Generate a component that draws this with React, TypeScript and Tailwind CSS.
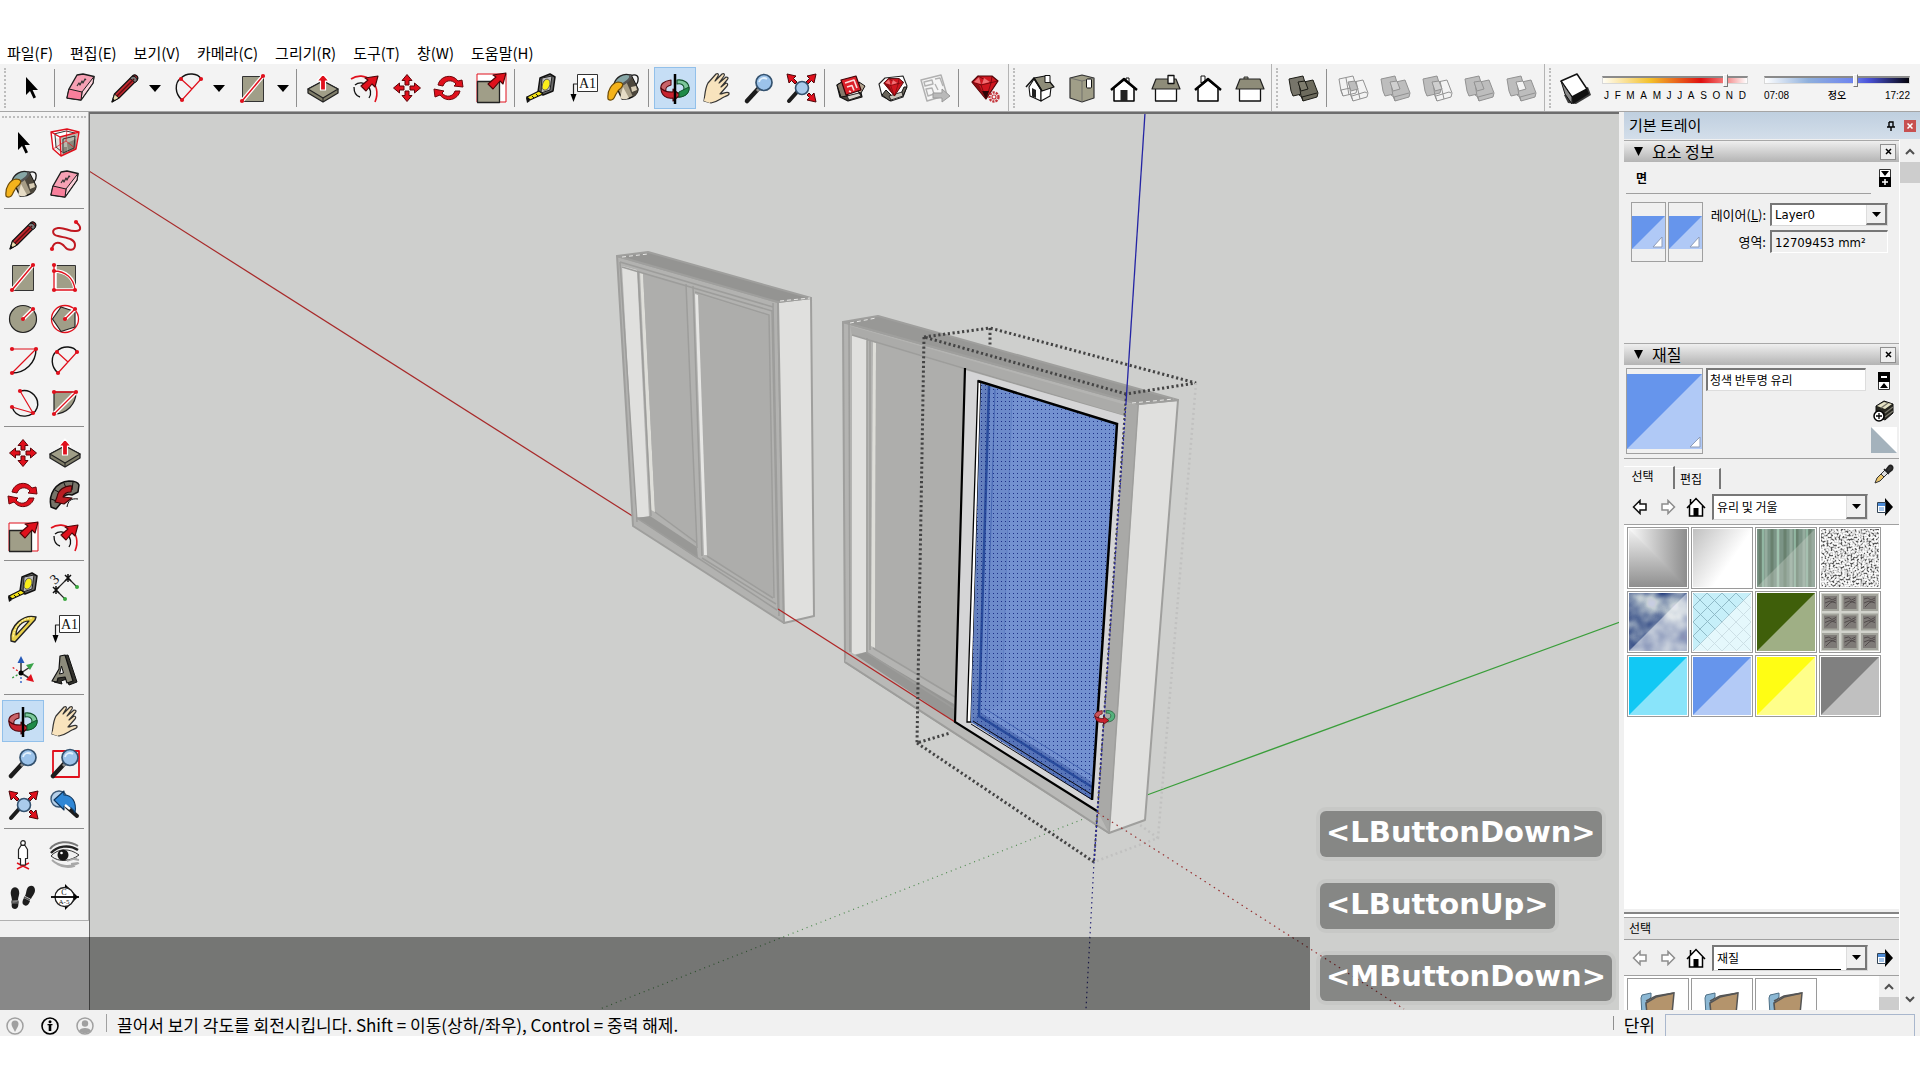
import type { ReactNode } from "react";
import { clsx } from "clsx";

const RED = "#e0101c";
const STONE = "#a09e88";

/* ---------- tool icons, all on a 36px grid ---------- */

function Svg({ children, size = 36 }: { children: ReactNode; size?: number }) {
  return (
    <svg width={size} height={size} viewBox="0 0 36 36" fill="none" strokeLinejoin="round" aria-hidden="true">
      {children}
    </svg>
  );
}

function Dots({ at }: { at: [number, number][] }) {
  return (
    <>
      {at.map(([x, y]) => (
        <circle key={`${x}-${y}`} cx={x} cy={y} r="2.1" fill={RED} />
      ))}
    </>
  );
}

const SelectIcon = () => (
  <Svg>
    <path d="M13 7v18l4-4 3.500 7.500 2.500-1.200-3.400-7.300H25z" fill="#000" />
  </Svg>
);

const ComponentIcon = () => (
  <Svg>
    <path d="M4 7l16-3 12 3-3 17-15 7-8-7z" fill="#fff" />
    <path d="M14 12l17-4-2 16-14 6z" fill="#b9b8ac" />
    <path d="M9 13l4 1v14l-5-4z" fill="#e4e4e0" />
    <path d="M20 18l9-4v10l-8 4zM17 22h3v6l-4 1z" fill="#8a887a" />
    <path d="M7 9l12-3 9 2M8 10l1 12 6 5M16 14l12-3-1 12-11 5z" stroke="#333" strokeWidth="1" />
    <path d="M4 7l16-3 12 3-3 17-15 7-8-7zM4 7l9 5 19-5M13 12l1 19" stroke={RED} strokeWidth="1.400" />
    <path d="M6 24l13-8 10 8M20 4l-1 12" stroke={RED} strokeWidth=".7" />
  </Svg>
);

const PaintIcon = () => (
  <Svg>
    <path d="M22 7c5-4 10-2 9 3 0 3-2 5-4 6" stroke="#111" strokeWidth="1.300" />
    <path d="M12 8l12-3 7 14c0 6-8 11-16 10L9 16z" fill="#a79d86" stroke="#111" strokeWidth="1.400" />
    <path d="M24 6l7 13c0 4-2 6-5 8L19 11z" fill="#4d473c" />
    <path d="M16 17l6 11c-4 2-8 1-9 0z" fill="#e6dcc6" />
    <path d="M24 17l5-1 1 4-5 2z" fill="#d8cdb5" />
    <path d="M7 14C9 7 16 3 23 5c2 3-4 9-12 11z" fill="#86a6a6" stroke="#222" strokeWidth="1.300" />
    <path d="M23 5c2 3-4 9-12 11" stroke="#555" strokeWidth="2.500" />
    <path d="M11 12c-6 1-11 8-10 17 2 2 5 1 6-1 2-3 2-7 7-10 3-3 2-6-3-6z" fill="#f4b31c" stroke="#6c4a06" strokeWidth="1.200" />
  </Svg>
);

const EraserIcon = () => (
  <Svg>
    <path d="M14 5l6-1 11 2.500L30 13 18 30 4 28l2-9z" fill="#f7a1b4" stroke="#1b1b1b" strokeWidth="1.400" />
    <path d="M19 22L31 6.500 30 13 18 30z" fill="#fbd0d9" stroke="#1b1b1b" strokeWidth="1" />
    <path d="M6 19l13 3-1 8-14-2z" fill="#f87f9b" stroke="#1b1b1b" strokeWidth="1" />
    <path d="M14 16l2-3 1 2 2-4 1 2 2-4 1 1" stroke="#333" strokeWidth="1.200" />
  </Svg>
);

const PencilIcon = () => (
  <Svg>
    <path d="M5 32l2.500-8L26 5.500c2-2 6 1 4.500 4L12 28z" fill="#c1272d" stroke="#111" strokeWidth="1.200" />
    <path d="M5 32l2.500-8 4.500 4z" fill="#ecdcae" stroke="#111" />
    <path d="M5 32l1.200-3.500 2 2z" fill="#111" />
    <path d="M24 7.500c2-3 7 0 6 3.500l-2 1.500-5-4z" fill="#777" stroke="#111" />
    <path d="M10 26L27 9" stroke="#5e0d10" strokeWidth="1.500" />
  </Svg>
);

const FreehandIcon = () => (
  <Svg>
    <path
      d="M29 5c5 4 6 9 0 9-7 1-11-4-18-3-7 1-6 7 0 8 7 2 17 2 17 9 0 6-7 6-10 2-4-5-11-7-13 2"
      stroke="#c01820"
      strokeWidth="2"
    />
    <Dots at={[[29, 5], [5, 32]]} />
  </Svg>
);

const RectIcon = () => (
  <Svg>
    <rect x="7.500" y="6.500" width="21" height="25" fill={STONE} stroke="#333" />
    <path d="M7 31L28 6" stroke="#fff" strokeWidth="4" />
    <path d="M7 31L28 6" stroke={RED} strokeWidth="1.500" />
    <Dots at={[[7, 31], [28, 6]]} />
  </Svg>
);

const RotRectIcon = () => (
  <Svg>
    <rect x="7.500" y="6.500" width="21" height="25" fill={STONE} stroke="#333" />
    <path d="M7 12c12 0 20 7 21 19M8 6v25h20" stroke="#fff" strokeWidth="3.500" />
    <path d="M7 6v25h21C27 19 18 12 7 12" stroke={RED} strokeWidth="1.300" />
    <Dots at={[[7, 6], [7, 12], [7, 31], [28, 31]]} />
  </Svg>
);

const CircleIcon = () => (
  <Svg>
    <circle cx="18" cy="18" r="13.500" fill={STONE} stroke="#222" strokeWidth="1.200" />
    <path d="M18 18l10-10" stroke="#fff" strokeWidth="4" />
    <path d="M18 18l10-10" stroke={RED} strokeWidth="1.300" />
    <Dots at={[[18, 18], [28, 8]]} />
  </Svg>
);

const PolygonIcon = () => (
  <Svg>
    <circle cx="18" cy="18" r="13.500" fill="#fff" stroke={RED} strokeWidth="1.300" />
    <path d="M5.500 18L14 6l14 4.500V26l-14 4.500z" fill={STONE} stroke="#222" strokeWidth="1.200" />
    <path d="M18 18l10-10" stroke="#fff" strokeWidth="4" />
    <path d="M18 18l10-10" stroke={RED} strokeWidth="1.300" />
    <Dots at={[[18, 18], [28, 8]]} />
  </Svg>
);

const ArcIcon = () => (
  <Svg>
    <path d="M31 6c0 14-11 24-24 24" stroke="#111" strokeWidth="1.400" />
    <path d="M7 6h24L7 30" stroke={RED} strokeWidth="1.200" />
    <Dots at={[[7, 6], [31, 6], [7, 30]]} />
  </Svg>
);

const Arc2Icon = () => (
  <Svg>
    <path d="M11 30C4 24 3 13 10 8c6-6 17-5 20 1" stroke="#111" strokeWidth="1.400" />
    <path d="M11 30L30 9M10 9l11 10" stroke={RED} strokeWidth="1.200" />
    <Dots at={[[10, 9], [30, 9], [11, 30]]} />
  </Svg>
);

const Arc3Icon = () => (
  <Svg>
    <path d="M15 6c12-3 20 8 17 17-3 9-20 13-25-1" stroke="#111" strokeWidth="1.400" />
    <path d="M15 6l13 22L7 22" stroke={RED} strokeWidth="1.200" />
    <Dots at={[[15, 6], [28, 28], [7, 22]]} />
  </Svg>
);

const PieIcon = () => (
  <Svg>
    <path d="M7 7h22c0 12-9 22-22 22z" fill={STONE} stroke="#222" strokeWidth="1.200" />
    <path d="M7 29L29 7" stroke="#fff" strokeWidth="4" />
    <path d="M7 7h22L7 29" stroke={RED} strokeWidth="1.300" />
    <Dots at={[[7, 7], [29, 7], [7, 29]]} />
  </Svg>
);

const MoveIcon = () => (
  <Svg>
    <g fill={RED} stroke="#5b0509" strokeWidth="1">
      {[0, 90, 180, 270].map((r) => (
        <path key={r} d="M18 4.500l5 6h-3V15h-4v-4.500h-3z" transform={`rotate(${r} 18 18)`} />
      ))}
    </g>
  </Svg>
);

const PushIcon = () => (
  <Svg>
    <path d="M3 19l15-8 15 8v4l-15 9-15-9z" fill="#7f7d69" stroke="#222" strokeWidth="1.300" />
    <path d="M3 19l15-8 15 8-15 9z" fill={STONE} stroke="#222" strokeWidth="1.200" />
    <path d="M18 28v4" stroke="#222" />
    <path d="M18 4l6 7h-3.500v9h-5v-9H12z" fill={RED} stroke="#fff" strokeWidth="1.200" />
  </Svg>
);

const RotateIcon = () => (
  <Svg>
    <g fill={RED} stroke="#6b060b" strokeWidth="1">
      <path d="M7 15c2-9 14-12 20-4l4-1 1 7-9-1 2-2c-4-5-11-4-13 2z" />
      <path d="M29 21c-2 9-14 12-20 4l-5 2-1-8 10 2-2 2c4 5 11 4 13-2z" />
    </g>
  </Svg>
);

const FollowIcon = () => (
  <Svg>
    <path d="M4 30C1 17 9 5 22 4c5 0 9 1 10 4l-1 7-6 3c-7-2-11 3-11 8l-5 6z" fill="#77756a" stroke="#111" strokeWidth="1.500" />
    <path d="M4 22l8 3M8 13l7 4M17 6l3 7M26 5l-1 8" stroke="#111" />
    <path d="M10 20c1-7 8-12 15-11l-1 6c-5 0-7 2-8 5l9 1-8 6-9-2z" fill="#b91d22" stroke="#3d0507" strokeWidth="1.100" />
    <path d="M20 30c1-6 4-9 11-8" stroke="#111" />
  </Svg>
);

const ScaleIcon = () => (
  <Svg>
    <rect x="4" y="4" width="29" height="28" fill="#fff" stroke={RED} strokeWidth="1" />
    <path d="M4.500 11.500h22v21h-22z" fill={STONE} stroke="#222" strokeWidth="1.300" />
    <path d="M33 3l-3 11-3-3-7 8-5-5 8-7-3-2z" fill={RED} stroke="#4d0407" strokeWidth="1.100" />
  </Svg>
);

const OffsetIcon = () => (
  <Svg>
    <path d="M4 9C17 0 36 13 28 32" stroke={RED} strokeWidth="1.600" />
    <path d="M8 15c8-7 20 4 14 13M7 17c0 6 2 9 6 10" stroke="#111" strokeWidth="1.300" />
    <path d="M31 6l-3 11-3-3-6 7-5-5 7-6-3-2z" fill={RED} stroke="#4d0407" strokeWidth="1.100" />
  </Svg>
);

const TapeIcon = () => (
  <Svg>
    <path d="M17 8l10-4 5 3-2 14-10 4-5-3z" fill="#6a6a6a" stroke="#111" strokeWidth="1.500" />
    <path d="M19 8l10-2-2 14-9 3z" fill="#bdbdbd" stroke="#222" />
    <path d="M21 11c2-3 6-2 6 2s-3 8-6 7-2-6 0-9z" fill="#fbef1a" stroke="#555" />
    <path d="M16 21l4 3-13 6-3-3z" fill="#f2e216" stroke="#111" strokeWidth="1.200" />
    <path d="M4 26l3 5-3 2-1-5z" fill="#111" />
    <path d="M9 26l2 2M13 24l2 2" stroke="#111" />
  </Svg>
);

const DimensionIcon = () => (
  <Svg>
    <path d="M9 21L21 9M9 21l9 9M21 9l9 9" stroke="#222" strokeWidth="1.100" />
    <path d="M6 18l6 6M12 18l-6 6M9 17v8M18 6l6 6M24 6l-6 6M21 5v8" stroke="#111" strokeWidth="1.500" />
    <circle cx="18" cy="30" r="2" fill="#3aa83f" />
    <circle cx="30" cy="18" r="2" fill="#3aa83f" />
    <text x="5" y="14" fontSize="14" fontFamily="Liberation Serif, serif" fill="#111" transform="rotate(-42 9 11)">3</text>
  </Svg>
);

const ProtractorIcon = () => (
  <Svg>
    <path d="M31 6C19 3 4 14 6 30l4 1L30 9z" fill="#e8d04a" stroke="#222" strokeWidth="1.400" />
    <path d="M24 10c-7 0-13 6-13 14z" fill="#f3f3f3" stroke="#222" strokeWidth="1.200" />
    <path d="M27 7C17 7 9 15 8 27" stroke="#fff6b0" strokeWidth="1.200" strokeDasharray="2 1" />
  </Svg>
);

const TextIcon = () => (
  <Svg>
    <rect x="12.500" y="4.500" width="20" height="17" fill="#fff" stroke="#333" />
    <text x="22.500" y="18" fontSize="14" textAnchor="middle" fontFamily="Liberation Serif, serif" fill="#111">
      A1
    </text>
    <path d="M12 14H8.500v12" stroke="#222" strokeWidth="1.200" />
    <path d="M5.500 24h6l-3 8z" fill="#000" />
  </Svg>
);

const AxesIcon = () => (
  <Svg>
    <path d="M16 20V8M16 20l9-6M16 20l8 5" stroke="#333" strokeWidth="1.500" />
    <path d="M16 20v10" stroke="#2356c4" strokeWidth="1.300" strokeDasharray="2 2" />
    <path d="M16 20l-9-6" stroke={RED} strokeWidth="1.300" strokeDasharray="2 2" />
    <path d="M16 20l-9 5" stroke="#3a9b42" strokeWidth="1.300" strokeDasharray="2 2" />
    <path d="M12.500 10L16 3l3.500 7z" fill="#2458b8" />
    <path d="M21 12l8-2-4 7z" fill="#3aa349" />
    <path d="M21 27l8 2-3-8z" fill={RED} />
    <circle cx="16" cy="20" r="2.500" fill="#000" />
  </Svg>
);

const Text3dIcon = () => (
  <Svg>
    <path d="M15 3l6-1 9 27-8 3-2-6-6 2 1 3-8-2 6-12z" fill="#33322c" stroke="#111" />
    <path d="M13 3l5-1 8 26-6 2-2-6-7 1-1 4-5-1 7-12z" fill="#8d8b7b" stroke="#111" strokeWidth="1.200" />
    <path d="M14.500 13l2 7-4 1z" fill="#f0f0f0" stroke="#111" />
  </Svg>
);

const OrbitIcon = ({ size }: { size?: number }) => (
  <Svg size={size}>
    <path d="M20 10c7-1 12 3 12 8 0 6-6 10-12 9v-4c4 0 7-2 7-5s-3-5-7-4z" fill="#7cc79b" stroke="#12522c" strokeWidth="1.100" />
    <path d="M14 10C7 11 3 14 4 19l5 2c-1-3 1-5 5-6z" fill="#c9646a" stroke="#5a0a10" strokeWidth="1.100" />
    <path d="M4 18c0 8 6 11 12 10v3l7-6-7-6v3c-5 0-9 0-12-4z" fill="#c8232f" stroke="#4c060b" strokeWidth="1.100" />
    <path d="M22 22l10-5c1 6-4 10-10 10z" fill="#1f8a48" stroke="#12522c" />
    <path d="M18 4v30" stroke="#000" strokeWidth="2.500" />
  </Svg>
);

const HandIcon = () => (
  <Svg>
    <path
      d="M5 31c1-6 1-13 4-18l8-9c2-1 3 0 2 2l-3 5 7-7c2-1 3 0 2 2l-5 7 7-6c2 0 3 1 1 3l-6 7 5-4c2 0 2 2 1 3l-7 8c3 0 7-3 9-1 1 2-3 3-5 4-4 2-7 5-13 6z"
      fill="#f8e3bd"
      stroke="#333"
      strokeWidth="1.200"
    />
    <path d="M5 31c1-5 3-8 8-9 2 4-1 8-2 11z" fill="#f8e3bd" />
  </Svg>
);

const Lens = () => (
  <>
    <path d="M17 19L6 31" stroke="#1c1c1c" strokeWidth="4.500" strokeLinecap="round" />
    <path d="M19 18l-3 3" stroke="#8c8c8c" strokeWidth="3" />
    <circle cx="23" cy="12.500" r="8" fill="#9cc3ea" stroke="#34526f" strokeWidth="1.700" />
    <path d="M18 12c1-4 5-5 8-3" stroke="#e2f0fc" strokeWidth="1.800" />
  </>
);

const ZoomIcon = () => (
  <Svg>
    <Lens />
  </Svg>
);

const ZoomWindowIcon = () => (
  <Svg>
    <rect x="6" y="6" width="26" height="26" stroke={RED} strokeWidth="1.800" />
    <Lens />
  </Svg>
);

const ExtentsIcon = () => (
  <Svg>
    <g fill={RED} stroke="#4d0407" strokeWidth="1">
      <path d="M4 4l9 2-2.500 2.500L14 12l-2 2-3.500-3.500L6 13z" />
      <path d="M33 4l-9 2 2.500 2.500L23 12l2 2 3.500-3.500L31 13z" />
      <path d="M33 32l-9-2 2.500-2.500L24 25l2-2 2.500 2.500L31 23z" />
    </g>
    <path d="M14 22l-8 9" stroke="#1c1c1c" strokeWidth="4" strokeLinecap="round" />
    <circle cx="19" cy="18" r="6.500" fill="#a9cbec" stroke="#34526f" strokeWidth="1.600" />
  </Svg>
);

const PreviousIcon = () => (
  <Svg>
    <circle cx="12" cy="12" r="8" fill="#b7d1ea" stroke="#3b5875" strokeWidth="1.400" />
    <path d="M20 20l10 9" stroke="#1c1c1c" strokeWidth="4" strokeLinecap="round" />
    <path d="M7 13l10-9v4c8 0 13 7 11 18-2-5-6-7-11-7v4z" fill="#2f87d6" stroke="#0e355c" strokeWidth="1.100" />
    <path d="M18 18l5 4" stroke="#fff" strokeWidth="2.500" />
  </Svg>
);

const PositionIcon = () => (
  <Svg>
    <path d="M12 32l12-6M24 32l-12-6" stroke={RED} strokeWidth="1.500" />
    <path d="M16 8.500l-2.500 4v9h2V28h5v-6.500h2v-9l-2.500-4z" fill="#fff" stroke="#222" strokeWidth="1.200" />
    <circle cx="18" cy="6" r="2.300" fill="#fff" stroke="#222" strokeWidth="1.200" />
  </Svg>
);

const EyeIcon = () => (
  <Svg>
    <path d="M3 12C9 4 22 3 31 9" stroke="#777" strokeWidth="2" />
    <path d="M4 16c6-7 18-9 27-3" stroke="#222" strokeWidth="2.500" />
    <path d="M4 19c7-8 19-8 28-1-8 6-20 8-28 1z" fill="#f0f0f0" stroke="#333" strokeWidth="1" />
    <circle cx="16" cy="18" r="5.500" fill="#161616" />
    <circle cx="14.500" cy="16" r="1.300" fill="#fff" />
    <path d="M5 23c6 6 18 8 27 3M10 27c5 3 12 4 18 2M20 24l10-3M27 22l5 1M24 27l7-1" stroke="#a8a8a8" strokeWidth="1.800" />
  </Svg>
);

const WalkIcon = () => (
  <Svg>
    <path d="M6 12c1-5 7-5 8 0 1 3-1 6-1 9l-6 1c0-4-2-7-1-10zM7 24l6-1c1 3 0 7-3 7s-4-3-3-6z" fill="#1d1d1d" />
    <path d="M22 10c2-5 8-4 8 1 0 4-3 6-4 9l-6-3c1-2 1-4 2-7zM19 19l6 3c-1 3-3 6-6 4-2-1-2-4 0-7z" fill="#1d1d1d" />
    <path d="M7 22h6v2H7zM19 18l6 3" stroke="#555" strokeWidth="1.500" />
  </Svg>
);

const SectionIcon = () => (
  <Svg>
    <path d="M18 5l13 13-13 13z" fill="#000" />
    <circle cx="17.500" cy="18" r="9.500" fill="#fff" stroke="#222" strokeWidth="1.300" />
    <path d="M4 18h28" stroke="#000" strokeWidth="1.800" />
    <text x="17" y="16" fontSize="8" textAnchor="middle" fontFamily="Liberation Serif, serif" fill="#111">C</text>
    <text x="17" y="25" fontSize="7" textAnchor="middle" fontFamily="Liberation Serif, serif" fill="#111">A-5</text>
  </Svg>
);

const WarehouseIcon = () => (
  <Svg>
    <path d="M4 15l5-3 6 14 13-3 1 4-14 4-8-4z" fill="#4a443a" stroke="#111" strokeWidth="1.200" />
    <path d="M4 15l5-3 5 14-6 1z" fill="#85796a" stroke="#111" />
    <path d="M26 12l6 4-4 7-3-1z" fill="#b5a590" stroke="#111" />
    <path d="M14 26l12-3 2 3-12 4z" fill="#d8d4cc" stroke="#111" strokeWidth=".8" />
    <path d="M8 10l15-4 5 14-15 5z" fill="#dc2029" stroke="#3d0407" strokeWidth="1.200" />
    <path d="M12 13l9-3 3 8M14 17l5-1.500 2 5M16 21l2 1" stroke="#fbdcdc" strokeWidth="1.600" />
  </Svg>
);

const Gem = () => (
  <>
    <path d="M5 12l6-6h14l6 5-12 18z" fill="#d01720" stroke="#4d0407" strokeWidth="1.200" />
    <path d="M5 12l14 17-7-14z" fill="#8d0d13" />
    <path d="M5 12l9 3 17-4M14 15l5 14 5-16M14 15l-3-9 13 7 1-7" stroke="#6b060b" strokeWidth=".8" />
    <path d="M12 7l-5 5 7 2zM15 14l8-2-6-4z" fill="#f07074" />
  </>
);

const ExtensionIcon = () => (
  <Svg>
    <path d="M4 14l6-6 18-2 4 10-4 11-12 4-9-5z" fill="#fff" stroke="#222" strokeWidth="1.100" />
    <path d="M7 25l4-5 8 8-4 3zM29 17l3 0-4 9-3 0z" fill="#6a655b" stroke="#111" />
    <path d="M14 26l13-4 1 4-12 4z" fill="#c9c4ba" stroke="#111" strokeWidth=".8" />
    <g transform="translate(5 4) scale(.76)">
      <Gem />
    </g>
  </Svg>
);

const LayoutIcon = () => (
  <Svg>
    <path d="M4 10l20-5 6 20-20 6z" fill="#f5f5f5" stroke="#b0b0b0" strokeWidth="1.500" />
    <path d="M7 12l8-2 1 4-8 2zM18 9l5-1 3 8M9 19l6-1 2 6-6 2zM18 14l3 6" stroke="#b2b2b2" strokeWidth="1.400" />
    <path d="M16 23h9v-4l8 7-8 6v-4h-9z" fill="#b9b9b9" stroke="#999" />
  </Svg>
);

const RubyIcon = () => (
  <Svg>
    <Gem />
    <path d="M19 29L15 21h7z" fill="#2c0305" />
    <circle cx="27" cy="27" r="4.500" fill="#f3f3f3" stroke="#c4343a" strokeWidth="2.400" strokeDasharray="2.200 1" />
    <circle cx="27" cy="27" r="2" stroke="#c4343a" strokeWidth="1.200" />
  </Svg>
);

const IsoIcon = () => (
  <Svg>
    <path d="M7 17l5-8 7 11v11L8 26z" fill="#fff" stroke="#111" strokeWidth="1.100" />
    <path d="M19 21l10-4-1 9-9 5z" fill="#fff" stroke="#111" strokeWidth="1.100" />
    <path d="M12 8l11-2 9 11-12 4z" fill="#8e8c79" stroke="#111" strokeWidth="1.200" />
    <path d="M4 17l8-9 8 13" stroke="#111" strokeWidth="1.500" />
    <path d="M23 5.500h5v7h-5z" fill="#fff" stroke="#111" />
    <path d="M10 18l4 2v8l-4-1.500z" fill="#222" />
  </Svg>
);

const TopIcon = () => (
  <Svg>
    <path d="M6 8l12-3 12 3v20l-12 4-12-4z" fill={STONE} stroke="#333" strokeWidth="1.200" />
    <path d="M6 8l12 3v21M18 11l12-3" stroke="#666" strokeWidth=".8" />
    <rect x="22.500" y="9" width="5" height="9" rx="1" fill="#fff" stroke="#111" />
  </Svg>
);

const HouseOutline = ({ door }: { door?: boolean }) => (
  <Svg>
    <path d={door ? "M23 13V8h-3v4z" : "M11 13V6h4v5z"} fill="#fff" stroke="#111" />
    <path d="M8 18l10-8 10 8v13H8z" fill="#fff" stroke="#000" strokeWidth="1.500" />
    <path d="M5 20L18 9l13 11" stroke="#000" strokeWidth="2.400" />
    {door && <path d="M14.500 20h7v11h-7z" fill="#222" />}
  </Svg>
);

const HouseSide = ({ tall }: { tall?: boolean }) => (
  <Svg>
    {!tall && <path d="M12 10V7h4v3z" fill={STONE} stroke="#333" />}
    <path d="M7.500 18h21v13h-21z" fill="#fff" stroke="#111" strokeWidth="1.300" />
    <path d="M8 9h20l4 10H4z" fill="#8e8c79" stroke="#222" strokeWidth="1.200" />
    {tall && <rect x="20" y="5.500" width="6" height="8" fill="#fff" stroke="#111" strokeWidth="1.300" />}
  </Svg>
);

/* two overlapping solids; the fills tell the boolean operations apart */
function SolidIcon({ a, b, mid, line = "#929292" }: { a: string; b: string; mid: string; line?: string }) {
  return (
    <Svg>
      <g stroke={line} strokeWidth="1">
        <path d="M4 9l14-3 4 13-1 4-13 3-2-5z" fill={a} />
        {a === "none" && <path d="M6 20l14-3 2 2M8 26l-2-6M11 8l3 17" />}
        <path d="M14 13l14-3 5 13-1 4-14 4-2-5z" fill={b} />
        {b === "none" ? <path d="M17 26l13-4 2 1M18 31l-2-6M21 11l4 18" /> : <path d="M14 25l3 2 15-4M17 27l1 4" />}
        <path d="M13 12l7-1 3 8-7 2z" fill={mid} />
      </g>
    </Svg>
  );
}

const ShadowIcon = () => (
  <Svg>
    <path d="M6 25l4 8 8 1 15-9-3-8z" fill="#3a3a3a" />
    <path d="M3 11l16-7 10 15-15 8z" fill="#fff" stroke="#111" strokeWidth="1.500" />
    <path d="M3 11l11 16v7L7 24z" fill="#8a8a8a" stroke="#111" />
    <path d="M14 27l15-8 2 5-16 10z" fill="#111" />
  </Svg>
);

/* ---------- toolbars ---------- */

function Tool({ label, icon, active }: { label: string; icon: ReactNode; active?: boolean }) {
  return (
    <button
      type="button"
      aria-label={label}
      aria-pressed={active}
      className={clsx(
        "flex h-[42px] w-[42px] shrink-0 items-center justify-center border",
        active ? "border-[#92c0ea] bg-[#c6def5]" : "border-transparent",
      )}
    >
      {icon}
    </button>
  );
}

const Drop = ({ label }: { label: string }) => (
  <button type="button" aria-label={label} className="flex w-[22px] shrink-0 pl-[3px]">
    <svg width="12" height="8" viewBox="0 0 12 8">
      <path d="M0 1h12L6 8z" fill="#000" />
    </svg>
  </button>
);

const Sep = () => <div className="mr-[5px] ml-0.5 h-[38px] w-px shrink-0 bg-[#8f8f8f]" />;
const RowSep = () => <div className="mx-0.5 mt-0.5 mb-[5px] h-px bg-[#8d8d8d]" />;
const Grip = () => (
  <div className="flex w-[10px] shrink-0 justify-center">
    <div className="h-10 border-l-2 border-dotted border-[#bdbdbd]" />
  </div>
);

const RANGE =
  "m-0 h-[14px] w-full cursor-pointer appearance-none bg-transparent [&::-webkit-slider-runnable-track]:h-2 [&::-webkit-slider-runnable-track]:border [&::-webkit-slider-runnable-track]:border-t-2 [&::-webkit-slider-runnable-track]:border-[#d8d8d8] [&::-webkit-slider-runnable-track]:border-t-[#8a8a8a] [&::-webkit-slider-thumb]:-mt-[4px] [&::-webkit-slider-thumb]:h-[13px] [&::-webkit-slider-thumb]:w-[5px] [&::-webkit-slider-thumb]:appearance-none [&::-webkit-slider-thumb]:border [&::-webkit-slider-thumb]:border-white [&::-webkit-slider-thumb]:border-r-[#777] [&::-webkit-slider-thumb]:border-b-[#777] [&::-webkit-slider-thumb]:bg-[#f0f0f0]";

const GRAY = "#bdbdbd";

function TopToolbar() {
  return (
    <div role="toolbar" aria-label="도구 모음" className="flex h-12 shrink-0 items-center border-b border-[#a5a5a5] bg-[#f3f3f3]">
      <div className="flex h-full shrink-0 items-center border-r border-[#b4b4b4] pr-0.5">
        <Grip />
        <Tool label="선택" icon={<SelectIcon />} />
        <Sep />
        <Tool label="지우기" icon={<EraserIcon />} />
        <div className="w-0.5 shrink-0" />
        <Tool label="선" icon={<PencilIcon />} />
        <Drop label="선 도구" />
        <Tool label="호" icon={<Arc2Icon />} />
        <Drop label="호 도구" />
        <Tool label="직사각형" icon={<RectIcon />} />
        <Drop label="도형 도구" />
        <div className="mr-[5px] h-[38px] w-px shrink-0 bg-[#8f8f8f]" />
        <Tool label="밀기/끌기" icon={<PushIcon />} />
        <Tool label="오프셋" icon={<OffsetIcon />} />
        <Tool label="이동" icon={<MoveIcon />} />
        <Tool label="회전" icon={<RotateIcon />} />
        <Tool label="배율" icon={<ScaleIcon />} />
        <Sep />
        <Tool label="줄자" icon={<TapeIcon />} />
        <Tool label="텍스트" icon={<TextIcon />} />
        <Tool label="페인트통" icon={<PaintIcon />} />
        <Sep />
        <Tool label="궤도" icon={<OrbitIcon />} active />
        <Tool label="이동 보기" icon={<HandIcon />} />
        <Tool label="확대/축소" icon={<ZoomIcon />} />
        <Tool label="범위 확대" icon={<ExtentsIcon />} />
        <Sep />
        <Tool label="3D Warehouse" icon={<WarehouseIcon />} />
        <Tool label="Extension Warehouse" icon={<ExtensionIcon />} />
        <Tool label="LayOut" icon={<LayoutIcon />} />
        <Sep />
        <Tool label="확장 관리자" icon={<RubyIcon />} />
      </div>
      <div className="flex h-full shrink-0 items-center border-r border-[#b4b4b4]">
        <Grip />
        <Tool label="등각" icon={<IsoIcon />} />
        <Tool label="위" icon={<TopIcon />} />
        <Tool label="앞" icon={<HouseOutline door />} />
        <Tool label="오른쪽" icon={<HouseSide tall />} />
        <Tool label="뒤" icon={<HouseOutline />} />
        <Tool label="왼쪽" icon={<HouseSide />} />
      </div>
      <div className="flex h-full shrink-0 items-center border-r border-[#b4b4b4] pr-0.5">
        <Grip />
        <Tool label="외부 쉘" icon={<SolidIcon a="#77756a" b="#6d6b5d" mid="#7f7d6e" line="#1c1c16" />} />
        <Sep />
        <Tool label="교차" icon={<SolidIcon a="none" b="none" mid={GRAY} />} />
        <Tool label="결합" icon={<SolidIcon a={GRAY} b={GRAY} mid="#cfcfcf" />} />
        <Tool label="빼기" icon={<SolidIcon a={GRAY} b="none" mid="#cfcfcf" />} />
        <Tool label="자르기" icon={<SolidIcon a={GRAY} b={GRAY} mid={GRAY} />} />
        <Tool label="분할" icon={<SolidIcon a={GRAY} b={GRAY} mid="#f3f3f3" />} />
      </div>
      <div className="flex h-full flex-1 items-center">
        <Grip />
        <Tool label="그림자" icon={<ShadowIcon />} />
        <div className="ml-[5px] flex flex-1 gap-4 pr-[10px] font-['Liberation_Sans','Noto_Sans_CJK_KR',sans-serif] text-[10px] leading-3 font-medium">
          <div className="flex-1">
            <input
              type="range"
              aria-label="날짜"
              min={0}
              max={100}
              defaultValue={86}
              className={clsx(
                RANGE,
                "[&::-webkit-slider-runnable-track]:bg-[linear-gradient(90deg,#fffdf4,#f3c02a_33%,#e01010_68%,#f06a6a_82%,#fff)]",
              )}
            />
            <div className="flex justify-between px-0.5">
              {"JFMAMJJASOND".split("").map((m, i) => (
                <span key={i}>{m}</span>
              ))}
            </div>
          </div>
          <div className="flex-1">
            <input
              type="range"
              aria-label="시간"
              min={0}
              max={100}
              defaultValue={63}
              className={clsx(
                RANGE,
                "[&::-webkit-slider-runnable-track]:bg-[linear-gradient(90deg,#fff,#8fb0dc_30%,#6f86ee_60%,#4a52d8_72%,#05050c)]",
              )}
            />
            <div className="flex justify-between">
              <span>07:08</span>
              <span>정오</span>
              <span>17:22</span>
            </div>
          </div>
        </div>
      </div>
    </div>
  );
}

const leftGroups: { label: string; icon: ReactNode; active?: boolean }[][] = [
  [
    { label: "선택", icon: <SelectIcon /> },
    { label: "구성요소 만들기", icon: <ComponentIcon /> },
    { label: "페인트통", icon: <PaintIcon /> },
    { label: "지우기", icon: <EraserIcon /> },
  ],
  [
    { label: "선", icon: <PencilIcon /> },
    { label: "자유선", icon: <FreehandIcon /> },
    { label: "직사각형", icon: <RectIcon /> },
    { label: "회전된 직사각형", icon: <RotRectIcon /> },
    { label: "원", icon: <CircleIcon /> },
    { label: "다각형", icon: <PolygonIcon /> },
    { label: "호", icon: <ArcIcon /> },
    { label: "2점 호", icon: <Arc2Icon /> },
    { label: "3점 호", icon: <Arc3Icon /> },
    { label: "파이", icon: <PieIcon /> },
  ],
  [
    { label: "이동", icon: <MoveIcon /> },
    { label: "밀기/끌기", icon: <PushIcon /> },
    { label: "회전", icon: <RotateIcon /> },
    { label: "따라가기", icon: <FollowIcon /> },
    { label: "배율", icon: <ScaleIcon /> },
    { label: "오프셋", icon: <OffsetIcon /> },
  ],
  [
    { label: "줄자", icon: <TapeIcon /> },
    { label: "치수", icon: <DimensionIcon /> },
    { label: "각도기", icon: <ProtractorIcon /> },
    { label: "텍스트", icon: <TextIcon /> },
    { label: "축", icon: <AxesIcon /> },
    { label: "3D 텍스트", icon: <Text3dIcon /> },
  ],
  [
    { label: "궤도", icon: <OrbitIcon />, active: true },
    { label: "이동 보기", icon: <HandIcon /> },
    { label: "확대/축소", icon: <ZoomIcon /> },
    { label: "확대/축소 창", icon: <ZoomWindowIcon /> },
    { label: "범위 확대", icon: <ExtentsIcon /> },
    { label: "이전", icon: <PreviousIcon /> },
  ],
  [
    { label: "카메라 배치", icon: <PositionIcon /> },
    { label: "둘러보기", icon: <EyeIcon /> },
    { label: "걷기", icon: <WalkIcon /> },
    { label: "단면", icon: <SectionIcon /> },
  ],
];

function LeftToolbar() {
  return (
    <div className="w-[89px] shrink-0 bg-[#f0f0f0]">
      <div className="border-r border-b border-[#b0b0b0] bg-[#f3f3f3] px-0.5 pb-0.5">
        <div className="flex h-[10px] items-center">
          <div className="w-full border-t-2 border-dotted border-[#bdbdbd]" />
        </div>
        {leftGroups.map((group, i) => (
          <div key={i}>
            {i > 0 && <RowSep />}
            <div className="grid w-[84px] grid-cols-2">
              {group.map((tool) => (
                <Tool key={tool.label} {...tool} />
              ))}
            </div>
          </div>
        ))}
      </div>
    </div>
  );
}

/* ---------- model view ---------- */

function Scene() {
  return (
    <svg viewBox="90 114 1529 896" preserveAspectRatio="xMidYMid slice" className="absolute inset-0 h-full w-full" fill="none">
      <defs>
        <pattern id="dots" width="4" height="4" patternUnits="userSpaceOnUse">
          <rect x="1" y="1" width="1" height="1" fill="#1c2f86" />
        </pattern>
      </defs>

      {/* axes behind the model */}
      <path d="M89 171L634 517" stroke="#a82a2a" strokeWidth="1.200" />
      <path d="M1147 795L1620 622" stroke="#3a9e3a" strokeWidth="1.300" />
      <path d="M1096 814L600 1009" stroke="#4d8a4d" strokeWidth="1.200" strokeDasharray="1 4" />

      {/* left window */}
      <g stroke="#9f9f9d" strokeWidth="2" strokeLinejoin="round">
        <path d="M617 256L778 302 784 623 633 526z" fill="#b2b2b0" />
        <path d="M778 302L811 298 814 616 784 623z" fill="#e0e0de" />
        <path d="M617 256L648 252 811 298 778 302z" fill="#949492" />
      </g>
      <path d="M622 266L637 270 649 517 636 517z" fill="#e0e0de" />
      <path d="M640 272L643 273 655 512 651 510z" fill="#deded9" />
      <path d="M643 273L686 285 696 545 655 512z" fill="#aeaeac" />
      <path d="M637 518L650 516 697 547 698 559z" fill="#989896" />
      <path d="M697 294L769 316 773 598 707 555z" fill="#adadab" />
      <g stroke="#9d9d9b" strokeWidth="1.500">
        <path d="M620 262L773 307M622 267L772 311M695 292L769 315 774 598M772 310L778 609M637 518L777 610M620 262L637 522" />
        <path d="M686 284L697 548M693 286L702 556M638 271L651 516M707 556L773 598M655 512L697 543M702 558L776 604" />
        <path d="M773 303L779 616" />
      </g>
      <path d="M695 294L698 295 707 555 704 555z" fill="#e6e6e4" />
      <path d="M622 257L648 254M780 301l30-3" stroke="#e8e8e6" strokeWidth="1" strokeDasharray="4 3" />

      {/* right window */}
      <g stroke="#9f9f9d" strokeWidth="2" strokeLinejoin="round">
        <path d="M843 322L1138 404 1109 833 845 662z" fill="#b4b4b2" />
        <path d="M1138 404L1178 400 1145 820 1109 833z" fill="#e0e0de" />
        <path d="M843 322L878 316 1178 400 1138 404z" fill="#989896" />
      </g>
      <path d="M850 326L1126 405 1124 416 852 335z" fill="#ababa9" />
      <path d="M852 335L867 339 866 652 852 655z" fill="#e0e0de" />
      <path d="M873 342L876 343 875 648 871 646z" fill="#deded9" />
      <path d="M876 343L964 369 954 697 875 648z" fill="#aeaeac" />
      <path d="M852 656L866 652 954 704 955 722z" fill="#969694" />
      <path d="M848 650L955 722 1098 812 1109 833 845 662z" fill="#b9b9b7" />
      <g stroke="#9d9d9b" strokeWidth="1.500">
        <path d="M849 324L850 652M852 335L1124 416M867 338V652M870 340V650M873 648L955 697M866 652L955 709" />
        <path d="M845 662L1109 833" strokeWidth="2" />
      </g>
      <path d="M850 323L876 318M1132 403l42-4" stroke="#e8e8e6" strokeWidth="1" strokeDasharray="4 3" />
      <path d="M778 609L955 722" stroke="#b02626" strokeWidth="1.300" />

      {/* active sash */}
      <path d="M965 370L1125 416 1097 811 955 722z" fill="#d5d5d6" />
      <path d="M978 381L981 383 971 722 967 722z" fill="#fff" stroke="#000" strokeWidth="1.300" />
      <path d="M981 383L1117 424 1092 800 971 722z" fill="#7391d0" />
      <path d="M982 384L990 387 980 717 971 720z" fill="#6480bd" />
      <path d="M990 387l22 8-10 308-12 7-10 6z" fill="#6d8bcb" />
      <path d="M971 722L980 712 1092 782 1092 800z" fill="#5674b8" />
      <path d="M989 386L979 716 1092 787" stroke="#294c9c" strokeWidth="2.500" />
      <path d="M995 389L986 692M984 708L1092 776" stroke="#4565b2" strokeWidth="1" />
      <path d="M1012 396L1002 703" stroke="#5f7fc4" strokeWidth="1" />
      <path d="M981 383L1117 424 1092 800 971 722z" fill="url(#dots)" shapeRendering="crispEdges" />
      <path d="M971 724L1091 799M973 721L1091 794" stroke="#0a0a14" strokeWidth="1" />
      <path d="M978 381L1117 424 1092 800" stroke="#000" strokeWidth="2.500" />
      <path d="M965 368L955 722 1097 811" stroke="#000" strokeWidth="2.200" />
      <path d="M1126 403L1138 405 1109 833 1098 812z" fill="#a9a9a7" />
      <path d="M1138 405L1109 833" stroke="#9f9f9d" strokeWidth="1" />

      {/* group bounds */}
      <g stroke="#444" strokeWidth="3" strokeDasharray="2.200 2.600">
        <path d="M924 337L990 328 1196 383 1126 394z" />
        <path d="M990 328V346M924 337L917 743 950 733M917 743L1094 862" />
      </g>
      <path d="M1126 394L1094 862" stroke="#444" strokeWidth="2" strokeDasharray="2.200 2.600" />
      <path d="M1196 383L1158 838 1094 862M1158 838l-18-13" stroke="#c1c1c0" strokeWidth="2.500" strokeDasharray="2 3" />

      {/* axes over the model */}
      <path d="M1145 113L1126 403" stroke="#2424a4" strokeWidth="1.300" />
      <path d="M1126 403L1094 862" stroke="#2424a4" strokeWidth="1.200" strokeDasharray="2 2" />
      <path d="M1094 862L1086 1009" stroke="#2b2b7a" strokeWidth="1.200" strokeDasharray="1.500 3.500" />
      <path d="M1098 813L1404 1009" stroke="#963030" strokeWidth="1.200" strokeDasharray="1.500 4" />

      {/* orbit cursor */}
      <g transform="translate(1093 704) scale(.66)">
        <path d="M20 10c7-1 13 3 13 8 0 6-6 10-13 9v-4c4 0 7-2 7-5s-3-5-7-4z" fill="#55b27d" stroke="#12522c" />
        <path d="M14 10C5 11 1 15 3 20l6 1c-1-3 1-5 5-6z" fill="#c9545b" stroke="#5a0a10" />
        <path d="M3 18c0 8 7 11 13 10v3l8-6-8-6v3c-5 0-9 0-13-4z" fill="#c8232f" stroke="#4c060b" />
      </g>
    </svg>
  );
}

const keys = ["<LButtonDown>", "<LButtonUp>", "<MButtonDown>"];

function Viewport() {
  return (
    <main className="relative min-w-0 flex-1 overflow-hidden border-t-2 border-l border-[#6d6d6d] bg-[#cecfcd]">
      <Scene />
      <div className="absolute right-[7px] bottom-[9px] flex flex-col items-start gap-[26px]">
        {keys.map((key) => (
          <kbd
            key={key}
            className="h-[46px] rounded-md bg-black/35 px-1.5 font-['DejaVu_Sans',sans-serif] text-[29px] leading-[42px] font-bold text-white shadow-[0_0_0_4px_rgba(0,0,0,0.03)]"
          >
            {key}
          </kbd>
        ))}
      </div>
    </main>
  );
}

/* ---------- tray ---------- */

function SectionHeader({ title }: { title: string }) {
  return (
    <div className="flex h-[22px] shrink-0 items-center border-t border-[#a8a8a8] bg-linear-to-b from-[#efefef] to-[#b4b4b4] pr-[3px] pl-[10px]">
      <svg width="9" height="9" viewBox="0 0 9 9" aria-hidden="true">
        <path d="M0 0h9L4.500 9z" fill="#000" />
      </svg>
      <h2 className="ml-[9px] flex-1 pb-0.5 text-base leading-5">{title}</h2>
      <button
        type="button"
        aria-label={`${title} 닫기`}
        className="flex h-4 w-4 items-center justify-center border border-[#8f8f8f] bg-[#eee]"
      >
        <svg width="7" height="7" viewBox="0 0 7 7">
          <path d="M1 1l5 5M6 1L1 6" stroke="#000" strokeWidth="1.500" />
        </svg>
      </button>
    </div>
  );
}

function Combo({ id, value, className, underline }: { id: string; value: string; className?: string; underline?: boolean }) {
  return (
    <div
      className={clsx(
        "relative flex items-center border border-t-2 border-l-2 border-[#d8d8d8] border-t-[#777] border-l-[#777] bg-white",
        className,
      )}
    >
      <select id={id} defaultValue={value} className="h-full w-full appearance-none bg-transparent pl-[3px] leading-5 outline-none">
        <option>{value}</option>
      </select>
      {underline && <div className="pointer-events-none absolute right-[26px] bottom-0 left-1 h-px bg-black" />}
      <div className="pointer-events-none absolute inset-y-0 right-0 flex w-[21px] items-center justify-center border-r-2 border-b-2 border-l border-[#777] border-l-[#ddd] bg-[#f0f0f0]">
        <svg width="9" height="5" viewBox="0 0 9 5">
          <path d="M0 0h9L4.500 5z" fill="#000" />
        </svg>
      </div>
    </div>
  );
}

function MiniSwatch() {
  return (
    <div className="flex h-[60px] w-[35px] items-center border border-[#a0a0a0]">
      <svg viewBox="0 0 33 33" className="w-full">
        <path d="M0 0h33v33H0z" fill="#b0c9f6" />
        <path d="M0 0h33L0 33z" fill="#6695ec" />
        <path d="M21 31h9V21z" fill="#fff" stroke="#8d9cb8" />
      </svg>
    </div>
  );
}

function EntityInfo() {
  return (
    <section className="min-h-[203px]">
      <SectionHeader title="요소 정보" />
      <div className="flex h-[31px] items-center justify-between pr-2 pl-3 text-xs font-bold">
        면
        <button type="button" aria-label="세부 정보 표시">
          <svg width="12" height="18" viewBox="0 0 12 18">
            <path d="M.5.500h11v17H.5z" fill="#fff" stroke="#333" />
            <path d="M2 2h8L6 7zM0 8h12v10H0z" fill="#000" />
            <path d="M3 13h6M6 10v6" stroke="#fff" strokeWidth="1.500" />
          </svg>
        </button>
      </div>
      <div className="mr-7 ml-0.5 h-px bg-[#a0a0a0]" />
      <div className="flex items-start pt-2 pr-[11px] pl-[7px]">
        <div className="flex gap-0.5">
          <MiniSwatch />
          <MiniSwatch />
        </div>
        <div className="grid flex-1 grid-cols-[1fr_118px] items-center gap-x-1 gap-y-1 pt-px text-[13px] leading-5">
          <label htmlFor="layer" className="text-right">
            레이어(<u>L</u>):
          </label>
          <Combo id="layer" value="Layer0" className="h-[23px] font-['DejaVu_Sans_Condensed',sans-serif]" />
          <label htmlFor="area" className="text-right">
            영역:
          </label>
          <input
            id="area"
            readOnly
            defaultValue="12709453 mm²"
            className="h-[23px] w-full border border-t-2 border-l-2 border-white border-t-[#777] border-l-[#777] bg-[#f0f0f0] pl-[3px] font-['DejaVu_Sans_Condensed',sans-serif] outline-none"
          />
        </div>
      </div>
    </section>
  );
}

const NavArrow = ({ muted, flip }: { muted?: boolean; flip?: boolean }) => (
  <svg width="16" height="16" viewBox="0 0 16 16" aria-hidden="true">
    <path
      d="M1.500 8L8 1.500V5h6v6H8v3.500z"
      fill="#fff"
      stroke={muted ? "#8d8d8d" : "#111"}
      strokeWidth="1.500"
      transform={flip ? "rotate(180 8 8)" : undefined}
    />
  </svg>
);

function NavRow({ id, value, backMuted, underline }: { id: string; value: string; backMuted?: boolean; underline?: boolean }) {
  return (
    <div className="flex h-[35px] shrink-0 items-center pr-1.5 pl-2">
      <button type="button" aria-label="뒤로">
        <NavArrow muted={backMuted} />
      </button>
      <button type="button" aria-label="앞으로" className="ml-3">
        <NavArrow muted flip />
      </button>
      <button type="button" aria-label="모델 내" className="ml-2.5">
        <svg width="20" height="20" viewBox="0 0 20 20">
          <path d="M3 9v10h14V9l-7-7z" fill="#fff" />
          <path d="M1 11l9-9.500L19 11M3.500 9v10h13V9M4.500 7V2" fill="none" stroke="#000" strokeWidth="1.500" />
          <path d="M7.500 11h5v8h-5z" fill="#000" />
        </svg>
      </button>
      <label htmlFor={id} className="sr-only">
        재질 모음
      </label>
      <Combo id={id} value={value} underline={underline} className="ml-1.5 h-[26px] flex-1 text-xs" />
      <button type="button" aria-label="세부 정보" className="ml-2">
        <svg width="17" height="18" viewBox="0 0 17 18">
          <path d="M4 5h5V0l8 9-8 9v-5H4z" fill="#000" />
          <path d="M1.500 4.500h8v10h-8z" fill="#fff" stroke="#345" />
          <path d="M2 5h7v3H2z" fill="#4c8cd8" />
          <path d="M3 10h5M3 12h5" stroke="#4c8cd8" />
        </svg>
      </button>
    </div>
  );
}

const Fade = () => <path d="M58 0v58H0z" fill="#fff" fillOpacity=".5" />;

const tiles: { name: string; art: ReactNode }[] = [
  {
    name: "회색 그라데이션",
    art: (
      <>
        <defs>
          <linearGradient id="g1" x1="0" y1="0" x2="0" y2="1">
            <stop offset="0" stopColor="#f2f2f2" />
            <stop offset="1" stopColor="#8f8f8f" />
          </linearGradient>
          <linearGradient id="g2" x1="0" y1="0" x2="1" y2="0">
            <stop offset="0" stopColor="#fafafa" />
            <stop offset="1" stopColor="#8c8c8c" />
          </linearGradient>
        </defs>
        <path d="M0 0h58v58H0z" fill="url(#g1)" />
        <path d="M0 0h58v58z" fill="url(#g2)" />
      </>
    ),
  },
  {
    name: "밝은 그라데이션",
    art: (
      <>
        <defs>
          <linearGradient id="g3" x1="0" y1="0" x2="1" y2=".7">
            <stop offset="0" stopColor="#c0c0c0" />
            <stop offset=".7" stopColor="#fff" />
          </linearGradient>
        </defs>
        <path d="M0 0h58v58H0z" fill="url(#g3)" />
      </>
    ),
  },
  {
    name: "골판 유리",
    art: (
      <>
        <path d="M0 0h58v58H0z" fill="#7b9486" />
        {[3, 9, 15, 21, 28, 34, 40, 47, 53].map((x, i) => (
          <path key={x} d={`M${x} 0v58`} stroke={i % 2 ? "#95ac9e" : "#69816f"} strokeWidth="3" />
        ))}
        <path d="M6 0v58M21 0v58M38 0v58M50 0v58" stroke="#a8d8bd" strokeWidth="1" />
        <path d="M58 0v58H0z" fill="#cfd3cc" fillOpacity=".35" />
      </>
    ),
  },
  {
    name: "점 무늬 유리",
    art: (
      <>
        <filter id="speck" x="0" y="0" width="1" height="1" colorInterpolationFilters="sRGB">
          <feTurbulence type="fractalNoise" baseFrequency=".5" numOctaves="2" seed="4" />
          <feColorMatrix values="4 0 0 0 -1.200  4 0 0 0 -1.200  4 0 0 0 -1.200  0 0 0 0 1" />
        </filter>
        <path d="M0 0h58v58H0z" filter="url(#speck)" />
        <path d="M0 0h58v58H0z" fill="#f2f2f2" fillOpacity=".35" />
      </>
    ),
  },
  {
    name: "하늘 반사",
    art: (
      <>
        <filter id="sky" x="0" y="0" width="1" height="1" colorInterpolationFilters="sRGB">
          <feTurbulence type="fractalNoise" baseFrequency=".035" numOctaves="3" seed="8" />
          <feColorMatrix values="2.200 0 0 0 -.680  2 0 0 0 -.500  1.200 0 0 0 0  0 0 0 0 1" />
        </filter>
        <path d="M0 0h58v58H0z" filter="url(#sky)" />
        <path d="M0 0h58v58H0z" fill="#4458a8" fillOpacity=".3" />
        <path d="M58 0v58H0z" fill="#fff" fillOpacity=".5" />
      </>
    ),
  },
  {
    name: "마름모 유리",
    art: (
      <>
        <path d="M0 0h58v58H0z" fill="#c6eff9" />
        <path
          d="M0 14L14 0M0 29L29 0M0 43L43 0M0 58L58 0M14 58L58 14M29 58L58 29M43 58L58 43M43 0l15 15M29 0l29 29M14 0l44 44M0 0l58 58M0 14l44 44M0 29l29 29M0 43l15 15"
          stroke="#8ab4c2"
          strokeWidth=".9"
        />
        <path d="M58 0v58H0z" fill="#fff" fillOpacity=".55" />
      </>
    ),
  },
  { name: "녹색 유리", art: <><path d="M0 0h58v58H0z" fill="#3f5f0a" /><Fade /></> },
  {
    name: "유리 블록",
    art: (
      <>
        <path d="M0 0h58v58H0z" fill="#d2d3cc" />
        {[0, 1, 2].map((r) =>
          [0, 1, 2].map((c) => (
            <g key={`${r}${c}`} transform={`translate(${c * 19.500 + 1} ${r * 19.500 + 1})`}>
              <path d="M0 0h17v17H0z" fill="#a3a49c" />
              <path d="M2 2h13v13H2z" fill="#7e7a77" />
              <path d="M3 5l4-1 3 2 4-2M3 9l5-2 6 2M4 13l4-4 6-3" stroke="#524c4c" />
            </g>
          )),
        )}
      </>
    ),
  },
  { name: "하늘색 유리", art: <><path d="M0 0h58v58H0z" fill="#12c8f4" /><Fade /></> },
  { name: "청색 반투명 유리", art: <><path d="M0 0h58v58H0z" fill="#6695ec" /><Fade /></> },
  { name: "노란색 유리", art: <><path d="M0 0h58v58H0z" fill="#fffd14" /><Fade /></> },
  { name: "회색 유리", art: <><path d="M0 0h58v58H0z" fill="#808080" /><Fade /></> },
];

function Chevron({ down }: { down?: boolean }) {
  return (
    <svg width="10" height="7" viewBox="0 0 10 7" aria-hidden="true">
      <path d={down ? "M1 1l4 4 4-4" : "M1 6l4-4 4 4"} fill="none" stroke="#505050" strokeWidth="2" />
    </svg>
  );
}

function Materials() {
  return (
    <section className="flex min-h-0 flex-1 flex-col">
      <SectionHeader title="재질" />
      <div className="flex px-0.5 pt-[3px] pb-1">
        <div className="flex h-[86px] w-[77px] items-center border border-[#a0a0a0]">
          <svg viewBox="0 0 75 75" className="w-full">
            <path d="M0 0h75v75H0z" fill="#b0c9f6" />
            <path d="M0 0h75L0 75z" fill="#6695ec" />
            <path d="M63 73h10V63z" fill="#fff" stroke="#8d9cb8" />
          </svg>
        </div>
        <input
          aria-label="재질 이름"
          defaultValue="청색 반투명 유리"
          className="ml-[3px] h-[23px] min-w-0 flex-1 border border-t-2 border-l-2 border-[#ddd] border-t-[#777] border-l-[#777] bg-white pb-0.5 pl-0.5 text-xs outline-none"
        />
        <div className="ml-[5px] flex w-[26px] flex-col items-center">
          <button type="button" aria-label="보조 창 숨기기" className="mt-1">
            <svg width="12" height="18" viewBox="0 0 12 18">
              <path d="M.5.500h11v17H.5z" fill="#fff" stroke="#333" />
              <path d="M0 0h12v10H0zM2 16h8l-4-5z" fill="#000" />
              <path d="M3 5h6" stroke="#fff" strokeWidth="2" />
            </svg>
          </button>
          <button type="button" aria-label="재질 만들기" className="mt-2.5">
            <svg width="22" height="22" viewBox="0 0 22 22">
              <path d="M3 6l8-5 9 3v9l-8 7-9-4z" fill="#26261f" stroke="#111" />
              <path d="M4 6l7-4 8 2-7 5z" fill="#e5e2c4" />
              <path d="M8 8l7-5M12 13l8-6M12 17l8-6" stroke="#77756a" strokeWidth="1.500" />
              <circle cx="6" cy="16" r="5" fill="#fff" stroke="#000" strokeWidth="1.500" />
              <path d="M3 16h6M6 13v6" stroke="#000" strokeWidth="1.300" />
            </svg>
          </button>
          <svg width="26" height="26" viewBox="0 0 26 26" className="mt-[5px] shrink-0" aria-hidden="true">
            <path d="M0 0h26v26H0z" fill="#fff" />
            <path d="M0 0v26h26z" fill="#a4b2bc" />
          </svg>
        </div>
      </div>
      <div className="flex h-[31px] shrink-0 items-end justify-between border-t border-[#a0a0a0] pr-1 text-xs">
        <div role="tablist" className="flex items-end">
          <button type="button" role="tab" aria-selected="true" className="h-[23px] w-[51px] border-t border-r-2 border-t-white border-r-[#777] pr-3 pb-1">
            선택
          </button>
          <button type="button" role="tab" aria-selected="false" className="h-[21px] w-[46px] border-t border-r-2 border-t-white border-r-[#777] pr-3">
            편집
          </button>
        </div>
        <button type="button" aria-label="샘플 페인트" className="mb-1">
          <svg width="22" height="22" viewBox="0 0 22 22">
            <path d="M2 20l2-5 8-8 3 3-8 8z" fill="#e8c36a" stroke="#333" />
            <path d="M8 11l4-4 3 3-4 4z" fill="#ddd" stroke="#333" />
            <path d="M11 6l5 5M13 7l3-4c2-2 5 1 3 4l-4 3z" fill="#333" stroke="#222" strokeWidth="1.600" />
          </svg>
        </button>
      </div>
      <NavRow id="collection" value="유리 및 거울" />
      <div className="min-h-0 flex-1 border-t border-[#a0a0a0] bg-white pt-0.5 pl-[3px]">
        <div className="grid w-max grid-cols-4 gap-0.5">
          {tiles.map((tile) => (
            <button key={tile.name} type="button" aria-label={tile.name} className="h-[62px] w-[62px] border border-[#9a9a9a] p-px">
              <svg viewBox="0 0 58 58" className="h-full w-full" fill="none">
                {tile.art}
              </svg>
            </button>
          ))}
        </div>
      </div>
      <div className="mt-[3px] h-[5px] shrink-0 border-t-2 border-[#858585] bg-white" />
      <div className="h-[23px] shrink-0 border-y border-[#a0a0a0] bg-[#e4e4e4] pl-[5px] text-xs leading-5">선택</div>
      <NavRow id="collection-secondary" value="재질" backMuted underline />
      <div className="flex h-[35px] shrink-0 justify-between overflow-hidden border-t border-[#a0a0a0] bg-white">
        <div className="flex items-start gap-0.5 pt-0.5 pl-[3px]">
          {["폴더 1", "폴더 2", "폴더 3"].map((name) => (
            <button key={name} type="button" aria-label={name} className="h-[62px] w-[62px] border border-[#9a9a9a]">
              <svg viewBox="0 0 60 60" className="h-full w-full">
                <path d="M13 19l1-3 9-2v4l-5 6 3 32-6-2z" fill="#8cb8d4" stroke="#4d6f86" />
                <path d="M18 24l10-6 18-4-4 42-21 2z" fill="#b4946c" stroke="#555" strokeWidth="1.500" />
                <path d="M18 22l10-5 18-3" fill="none" stroke="#555" strokeWidth="1.500" />
              </svg>
            </button>
          ))}
        </div>
        <div className="flex w-5 flex-col items-center bg-[#f0f0f0]">
          <div className="flex h-[21px] items-center">
            <Chevron />
          </div>
          <div className="w-full flex-1 bg-[#cdcdcd]" />
        </div>
      </div>
    </section>
  );
}

function Tray() {
  return (
    <aside className="ml-[5px] flex w-[296px] shrink-0 flex-col">
      <div className="flex h-[27px] shrink-0 items-center bg-linear-to-b from-[#bfcfdf] to-[#d3deea] pr-1 pl-[5px]">
        <h1 className="flex-1 text-[15px]">기본 트레이</h1>
        <button type="button" aria-label="고정" className="mr-[9px]">
          <svg width="8" height="10" viewBox="0 0 8 10">
            <path d="M2 1h4v5M2 1v5M0 6h8M4 6v4" fill="none" stroke="#000" strokeWidth="1.400" />
          </svg>
        </button>
        <button type="button" aria-label="트레이 닫기" className="flex h-3 w-3 items-center justify-center bg-[#c75050]">
          <svg width="6" height="6" viewBox="0 0 6 6">
            <path d="M.5.500l5 5M5.500.500l-5 5" stroke="#fff" strokeWidth="1.500" />
          </svg>
        </button>
      </div>
      <div className="flex min-h-0 flex-1 pt-px">
        <div className="flex min-w-0 flex-1 flex-col">
          <EntityInfo />
          <Materials />
        </div>
        <div className="flex w-[21px] flex-col items-center border-l border-white bg-[#f0f0f0]">
          <div className="flex h-[22px] items-center">
            <Chevron />
          </div>
          <div className="h-[21px] w-full bg-[#cdcdcd]" />
          <div className="flex-1" />
          <div className="flex h-[22px] items-center">
            <Chevron down />
          </div>
        </div>
      </div>
    </aside>
  );
}

/* ---------- frame ---------- */

const menus = ["파일(F)", "편집(E)", "보기(V)", "카메라(C)", "그리기(R)", "도구(T)", "창(W)", "도움말(H)"];

function StatusBar() {
  return (
    <footer className="flex h-[26px] shrink-0 items-center bg-[#f1f1f1] text-[17px] leading-5">
      <div className="flex gap-[17px] pt-1.5 pl-1.5">
        <svg width="18" height="18" viewBox="0 0 18 18" aria-hidden="true">
          <circle cx="9" cy="9" r="8" fill="none" stroke="#a0a0a0" strokeWidth="1.500" />
          <path d="M9 15C7 11 5.500 9 5.500 7a3.500 3.500 0 017 0c0 2-1.500 4-3.500 8z" fill="#a0a0a0" />
        </svg>
        <svg width="18" height="18" viewBox="0 0 18 18" aria-hidden="true">
          <circle cx="9" cy="9" r="8" fill="none" stroke="#000" strokeWidth="1.600" />
          <circle cx="9" cy="4.800" r="1.500" fill="#000" />
          <path d="M6.500 7h5v1.200h-1.200V14H7.700V8.200H6.500z" fill="#000" />
        </svg>
        <svg width="18" height="18" viewBox="0 0 18 18" aria-hidden="true">
          <circle cx="9" cy="9" r="8" fill="none" stroke="#a0a0a0" strokeWidth="1.500" />
          <circle cx="9" cy="6.500" r="3.200" fill="#a0a0a0" />
          <path d="M3 14c1-4 11-4 12 0-3 3-9 3-12 0z" fill="#a0a0a0" />
        </svg>
      </div>
      <div className="mr-[10px] ml-3 h-[18px] w-px bg-[#a0a0a0]" />
      <p className="flex-1 pt-1">끌어서 보기 각도를 회전시킵니다. Shift = 이동(상하/좌우), Control = 중력 해제.</p>
      <div className="mr-[10px] h-[14px] w-px bg-[#8f8f8f]" />
      <label htmlFor="vcb" className="pt-1">
        단위
      </label>
      <input id="vcb" className="mt-1 mr-[5px] ml-[10px] h-[22px] w-[250px] border border-b-0 border-[#a9b7cd] bg-[#f0f0f0] px-1 outline-none" />
    </footer>
  );
}

export default function App() {
  return (
    <div className="flex h-screen flex-col bg-white pt-10 pb-11 font-['Noto_Sans_CJK_KR',sans-serif] text-black">
      <nav className="flex h-6 shrink-0 items-center gap-[17px] pt-0.5 pl-[7px] text-[15px] leading-5">
        {menus.map((menu) => (
          <button key={menu} type="button">
            {menu}
          </button>
        ))}
      </nav>
      <TopToolbar />
      <div className="relative flex min-h-0 flex-1 bg-[#f0f0f0]">
        <LeftToolbar />
        <Viewport />
        <Tray />
        <div className="pointer-events-none absolute right-[610px] bottom-0 left-0 h-[73px] bg-black/43" />
      </div>
      <StatusBar />
    </div>
  );
}
